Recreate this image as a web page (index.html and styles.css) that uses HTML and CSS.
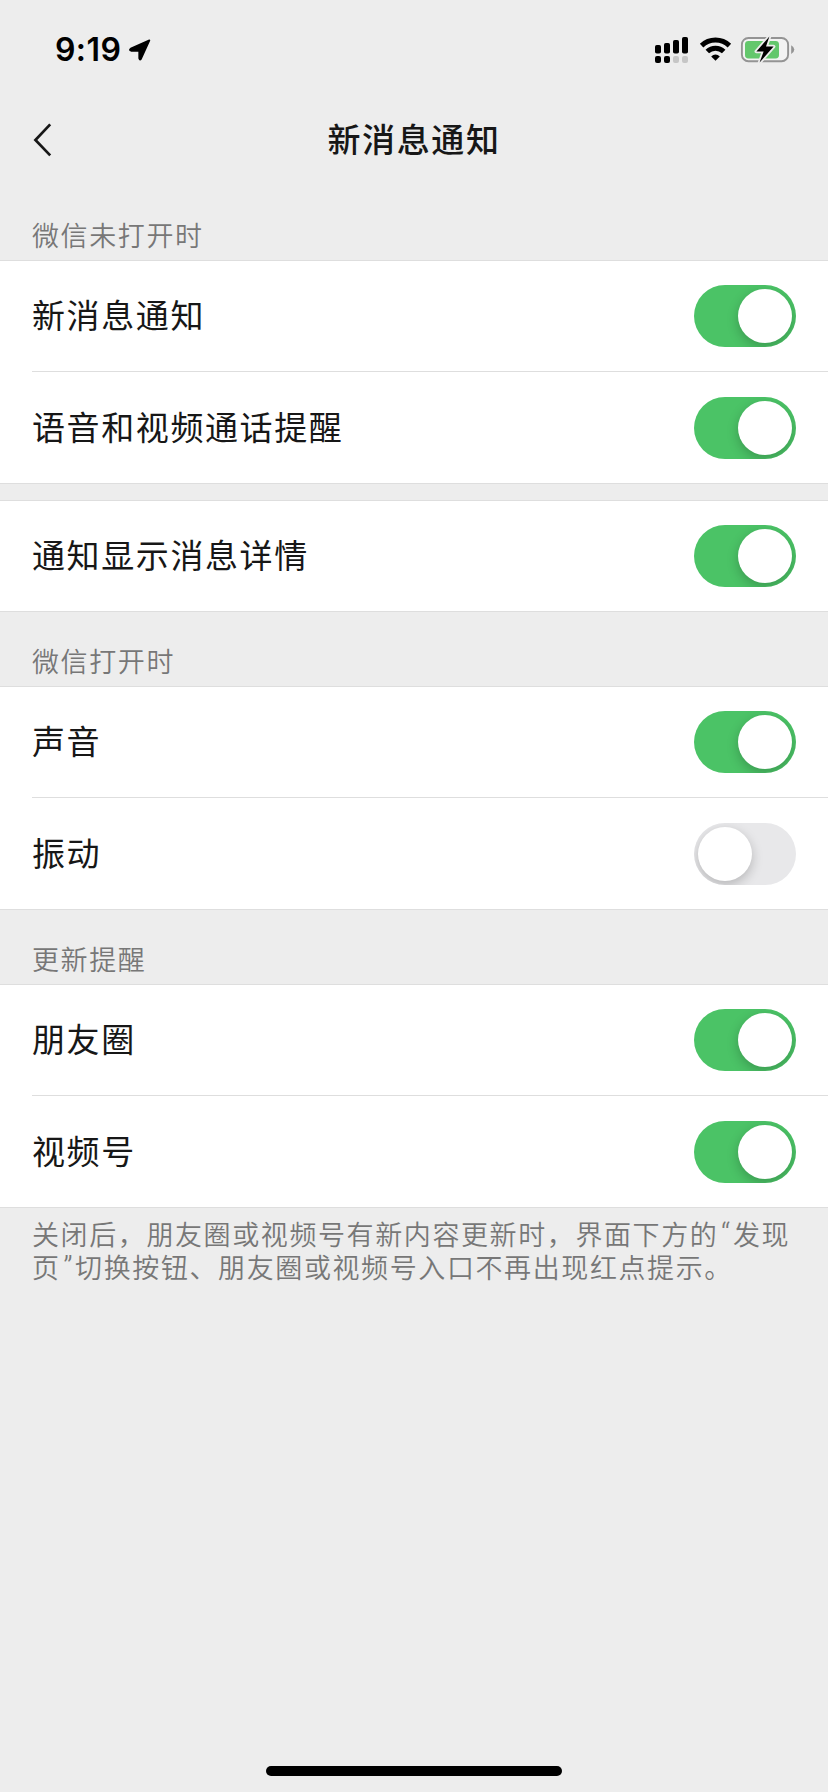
FILE: index.html
```html
<!DOCTYPE html>
<html lang="zh-CN">
<head>
<meta charset="utf-8">
<title>新消息通知</title>
<link rel="stylesheet" href="styles.css">
</head>
<body>
<div class="screen">
  <div class="status-bar">
    <div class="status-left">
      <span class="clock">9:19</span>
      <svg class="location" width="24" height="24" viewBox="0 0 24 24"><path d="M21.4 2.4 L13.1 20.7 Q11.8 22.6 11.2 20.4 V12.8 H3.2 Q0.8 12 2.8 10.6 Z" fill="#000" stroke="#000" stroke-width="1.7" stroke-linejoin="round"/></svg>
    </div>
    <svg class="status-icons" width="150" height="40" viewBox="650 30 150 40">
      <g fill="#000">
        <rect x="655" y="45" width="6" height="8.5" rx="1.8"/>
        <rect x="664" y="43" width="6" height="10.5" rx="1.8"/>
        <rect x="673" y="40" width="6" height="13.5" rx="1.8"/>
        <rect x="682" y="37" width="6" height="16.5" rx="1.8"/>
        <rect x="655" y="56" width="6" height="7" rx="2"/>
        <rect x="664" y="56" width="6" height="7" rx="2"/>
      </g>
      <g fill="#c6c6c6">
        <rect x="673" y="56" width="6" height="7" rx="2"/>
        <rect x="682" y="56" width="6" height="7" rx="2"/>
      </g>
      <g fill="none" stroke="#000" stroke-width="5">
        <path d="M701.6 45.6 A20 20 0 0 1 729.4 45.6"/>
        <path d="M707.3 51.5 A11.8 11.8 0 0 1 723.7 51.5"/>
      </g>
      <path d="M715.5 60.8 L711.2 56.4 A6 6 0 0 1 719.8 56.4 Z" fill="#000"/>
      <rect x="741.9" y="38" width="46.2" height="23.2" rx="6.5" fill="#f3f3f3" stroke="#949494" stroke-width="1.9"/>
      <rect x="745" y="41" width="34" height="17.4" rx="3.4" fill="#63c76c"/>
      <path d="M791.2 45.2 Q794.3 47 794.3 49.6 T791.2 54 Z" fill="#949494"/>
      <path d="M769.4 36.6 L756.4 51.4 H763.6 L759.6 62.6 L773.6 46.6 H766 Z" fill="#000" stroke="#ededed" stroke-width="3.6" stroke-linejoin="round" paint-order="stroke"/>
    </svg>
  </div>

  <header class="nav">
    <svg class="back" width="20" height="36" viewBox="0 0 20 36"><path d="M17.2 2.4 L2.4 18 L17.2 33.4" fill="none" stroke="#171717" stroke-width="2.7"/></svg>
    <h1 class="title">新消息通知</h1>
  </header>

  <h2 class="section-label section-label-first">微信未打开时</h2>
  <section class="group">
    <div class="row"><span class="name">新消息通知</span><span class="switch on"></span></div>
    <div class="row"><span class="name">语音和视频通话提醒</span><span class="switch on"></span></div>
  </section>

  <section class="group group-spaced">
    <div class="row"><span class="name">通知显示消息详情</span><span class="switch on"></span></div>
  </section>

  <h2 class="section-label">微信打开时</h2>
  <section class="group">
    <div class="row"><span class="name">声音</span><span class="switch on"></span></div>
    <div class="row"><span class="name">振动</span><span class="switch"></span></div>
  </section>

  <h2 class="section-label">更新提醒</h2>
  <section class="group">
    <div class="row"><span class="name">朋友圈</span><span class="switch on"></span></div>
    <div class="row"><span class="name">视频号</span><span class="switch on"></span></div>
  </section>

  <p class="note">关闭后，朋友圈或视频号有新内容更新时，界面下方的<span class="quote">“</span>发现<br>页<span class="quote">”</span>切换按钮、朋友圈或视频号入口不再出现红点提示。</p>

  <div class="home-indicator"></div>
</div>
</body>
</html>
```

FILE: styles.css
```css
* {
  box-sizing: border-box;
}

body {
  margin: 0;
  background: #ededed;
  font-family: "Noto Sans CJK SC", sans-serif;
  color: #171717;
}

.screen {
  display: flex;
  flex-direction: column;
  width: 828px;
  height: 1792px;
  overflow: hidden;
}

.status-bar {
  display: flex;
  justify-content: space-between;
  align-items: center;
  height: 100px;
  padding: 0 28px 0 55px;
}

.status-left {
  display: flex;
  align-items: center;
  gap: 7px;
}

.clock {
  font: 600 32px/40px Inter, sans-serif;
  letter-spacing: 0.4px;
  color: #000;
}

.nav {
  display: grid;
  grid-template-columns: 1fr auto 1fr;
  align-items: center;
  height: 80px;
  padding: 0 32px;
}

.back {
  margin-left: 1px;
}

.title {
  margin: 0;
  padding-bottom: 4px;
  font-size: 33px;
  line-height: 48px;
  font-weight: 500;
  letter-spacing: 1.6px;
}

.section-label {
  height: 74px;
  margin: 0;
  padding: 31px 32px 0;
  font-size: 27px;
  line-height: 36px;
  font-weight: 350;
  letter-spacing: 1.6px;
  color: #777;
}

.section-label-first {
  height: 80px;
  padding-top: 37px;
}

.group {
  background: #fff;
  border-top: 1px solid #dedede;
  border-bottom: 1px solid #dedede;
}

.group-spaced {
  margin-top: 16px;
}

.row {
  display: flex;
  align-items: center;
  justify-content: space-between;
  height: 110px;
  margin-left: 32px;
  padding-right: 32px;
}

.row + .row {
  height: 112px;
  border-top: 1px solid #dedede;
}

.name {
  padding-bottom: 4px;
  font-size: 33px;
  line-height: 48px;
  font-weight: 400;
  letter-spacing: 1.6px;
}

.switch {
  display: flex;
  width: 102px;
  height: 62px;
  padding: 4px;
  border-radius: 31px;
  background: #e8e8ea;
  overflow: hidden;
}

.switch::before {
  content: "";
  width: 54px;
  height: 54px;
  border-radius: 50%;
  background: #fff;
  box-shadow: 0 4px 12px rgba(0, 0, 0, 0.22);
}

.switch.on {
  justify-content: flex-end;
  background: #4bc366;
}

.note {
  margin: 0;
  padding: 9px 0 0 32px;
  font-size: 27px;
  line-height: 33px;
  font-weight: 350;
  letter-spacing: 1.6px;
  color: #777;
  white-space: nowrap;
}

.quote {
  display: inline-block;
  width: 14.5px;
  font-family: Roboto, sans-serif;
  font-size: 31px;
  line-height: 1;
  letter-spacing: 0;
  font-weight: 300;
  text-align: center;
}

.home-indicator {
  width: 296px;
  height: 10px;
  margin: auto auto 16px;
  border-radius: 5px;
  background: #000;
}
```
